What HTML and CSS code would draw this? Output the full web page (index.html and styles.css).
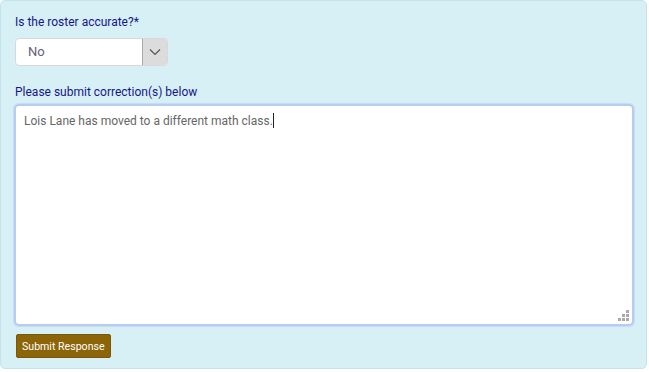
FILE: index.html
```html
<!DOCTYPE html>
<html>
<head>
    <title>Roster check</title>
    <link rel="stylesheet" href="styles.css">
</head>
<body>
    <div id="panel">
        <label class="label">Is the roster accurate?*</label>
        <div class="select">
            <span class="select-value">No</span>
            <span class="select-arrow">
                <svg width="12" height="8" viewBox="0 0 12 8"><path d="M1 1.5 L6 6.5 L11 1.5" fill="none" stroke="#555" stroke-width="1.2"/></svg>
            </span>
        </div>
        <label class="label label-2">Please submit correction(s) below</label>
        <div class="textarea">
            <span class="text">Lois Lane has moved to a different math class.</span><span class="caret"></span>
            <svg class="grip" width="11" height="11" viewBox="0 0 11 11" fill="#aaa">
                <rect x="8" y="0" width="3" height="3"/>
                <rect x="4" y="4" width="3" height="3"/><rect x="8" y="4" width="3" height="3"/>
                <rect x="0" y="8" width="3" height="3"/><rect x="4" y="8" width="3" height="3"/><rect x="8" y="8" width="3" height="3"/>
            </svg>
        </div>
        <button class="submit">Submit Response</button>
    </div>
</body>
</html>
```

FILE: styles.css
```css
body {
    margin: 0;
    background: #fff;
    font-family: Roboto, "Liberation Sans", sans-serif;
}
#panel {
    width: 632px;
    height: 353px;
    padding: 14px 0 0 13px;
    background: #d7f0f5;
    border: 1px solid #c6e3ea;
    border-radius: 5px;
    box-sizing: content-box;
    display: flex;
    flex-direction: column;
    align-items: flex-start;
}
.label {
    margin-left: 1px;
    font-size: 12px;
    color: #16168a;
    line-height: 14px;
}
.label-2 {
    margin-top: 19px;
}
.select {
    margin-top: 9px;
    margin-left: 1px;
    width: 151px;
    height: 26px;
    background: #fff;
    border: 1px solid #d8d8d8;
    border-radius: 4px;
    display: flex;
    overflow: hidden;
}
.select-value {
    flex: 1;
    padding-left: 12px;
    font-size: 13px;
    color: #6a5d7a;
    line-height: 26px;
}
.select-arrow {
    width: 24px;
    background: #dcdcdc;
    border-left: 1px solid #aaa;
    display: flex;
    align-items: center;
    justify-content: center;
}
.textarea {
    position: relative;
    margin-top: 5px;
    width: 600px;
    height: 205px;
    padding: 7px 8px 6px 8px;
    background: #fff;
    border: 2px solid #b6cdf0;
    border-radius: 5px;
    box-shadow: 0 0 1px 1px #c8daf5;
    font-size: 12px;
    color: #666;
    line-height: 16px;
}
.caret {
    display: inline-block;
    width: 1px;
    height: 15px;
    background: #222;
    vertical-align: -3px;
}
.grip {
    position: absolute;
    right: 3px;
    bottom: 3px;
}
.submit {
    margin-top: 8px;
    margin-left: 2px;
    height: 24px;
    padding: 0 5px;
    background: #8c6508;
    border: 1px solid #7a5806;
    border-radius: 2px;
    color: #fff;
    font-family: Roboto, "Liberation Sans", sans-serif;
    font-size: 10.6px;
}
```
